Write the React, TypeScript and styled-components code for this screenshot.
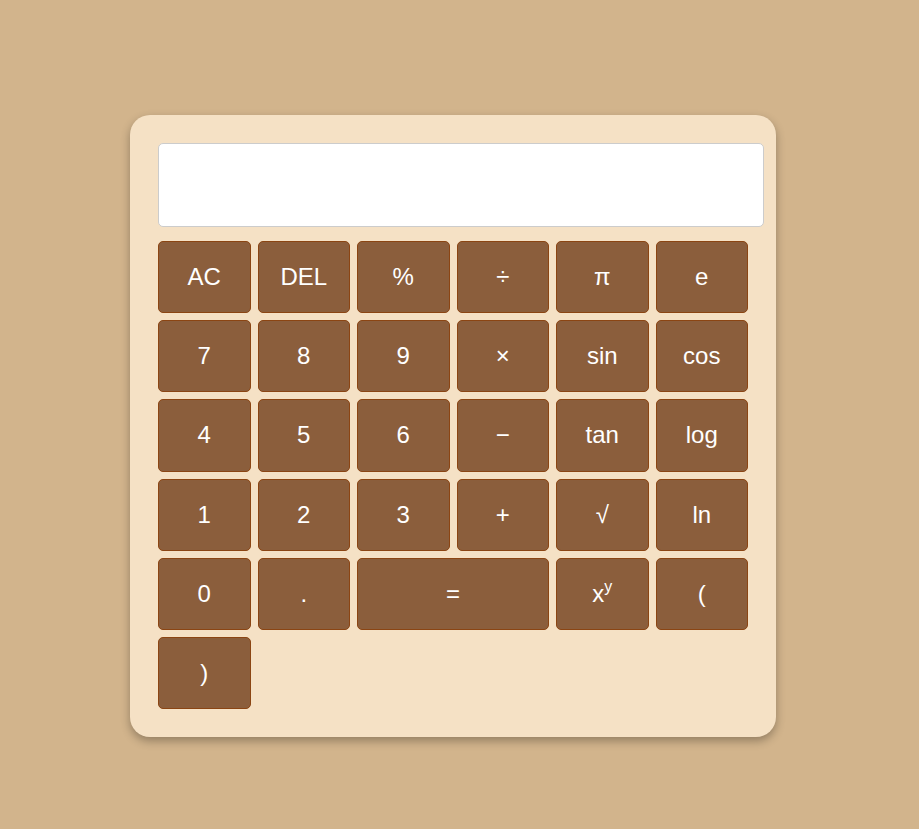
import React from "react";
import styled, { createGlobalStyle } from "styled-components";

const Global = createGlobalStyle`
  html, body { margin: 0; padding: 0; }
  body {
    background: #d2b48c;
    font-family: Arial, "Liberation Sans", sans-serif;
    min-height: 829px;
  }
  * { box-sizing: border-box; }
`;

const Page = styled.div`
  display: flex;
  justify-content: center;
  padding-top: 115px;
  padding-right: 13px;
`;

const Card = styled.div`
  width: 646px;
  background: #f5e0c4;
  background: #f5e1c5;
  border-radius: 20px;
  padding: 28px;
  box-shadow: 0 4px 10px rgba(0, 0, 0, 0.3);
  display: flex;
  flex-direction: column;
  gap: 14px;
`;

const Display = styled.div`
  box-sizing: content-box;
  width: 100%;
  height: 68px;
  padding: 7px;
  margin-right: -16px;
  background: #fff;
  border: 1px solid #ccc;
  border-radius: 5px;
  font-size: 32px;
  text-align: right;
`;

const Grid = styled.div`
  display: grid;
  grid-template-columns: repeat(6, 1fr);
  grid-auto-rows: 72.2px;
  gap: 7px;
`;

const Key = styled.button<{ $span?: number }>`
  grid-column: span ${(p) => p.$span ?? 1};
  background: #8b5e3c;
  border: 1px solid #8b4513;
  border-radius: 5px;
  color: #fff;
  font-family: Arial, "Liberation Sans", sans-serif;
  font-size: 24px;
  padding: 0;
  display: flex;
  align-items: center;
  justify-content: center;
  cursor: pointer;
`;

const Sup = styled.sup`
  font-size: 16px;
  line-height: 0;
  position: relative;
  top: -1px;
`;

const keys: { label: React.ReactNode; span?: number }[] = [
  { label: "AC" }, { label: "DEL" }, { label: "%" }, { label: "÷" }, { label: "π" }, { label: "e" },
  { label: "7" }, { label: "8" }, { label: "9" }, { label: "×" }, { label: "sin" }, { label: "cos" },
  { label: "4" }, { label: "5" }, { label: "6" }, { label: "−" }, { label: "tan" }, { label: "log" },
  { label: "1" }, { label: "2" }, { label: "3" }, { label: "+" }, { label: "√" }, { label: "ln" },
  { label: "0" }, { label: "." }, { label: "=", span: 2 },
  { label: <span>x<Sup>y</Sup></span> }, { label: "(" },
  { label: ")" },
];

export default function App() {
  return (
    <>
      <Global />
      <Page>
        <Card>
          <Display />
          <Grid>
            {keys.map((k, i) => (
              <Key key={i} $span={k.span}>{k.label}</Key>
            ))}
          </Grid>
        </Card>
      </Page>
    </>
  );
}
